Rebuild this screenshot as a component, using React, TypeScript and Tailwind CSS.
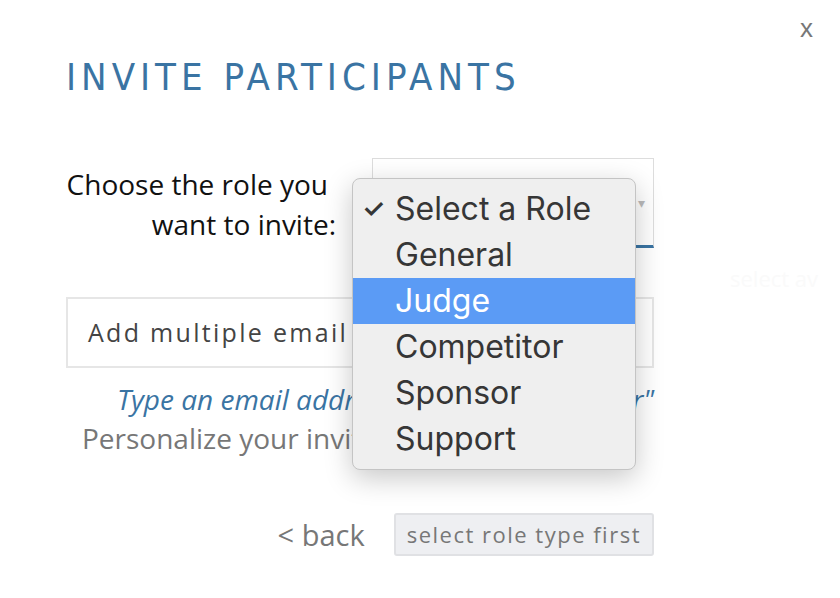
import React from "react";

const roles = ["Select a Role", "General", "Judge", "Competitor", "Sponsor", "Support"];

// native select popup as it is drawn open over the form
const RoleMenu = () => (
  <div className="absolute left-[352px] top-[178px] w-[284px] rounded-[8px] border border-[#c4c4c4] bg-[#efefef] py-[7px] shadow-[0_8px_28px_rgba(0,0,0,0.22)] font-['Inter',sans-serif] text-[32px] text-[#363636]">
    {roles.map((r, i) => (
      <div
        key={r}
        className={
          i === 2
            ? "flex h-[46px] items-center bg-[#5b9bf5] text-white"
            : "flex h-[46px] items-center"
        }
      >
        <span className="w-[42px] pl-[9px] text-[26px] font-semibold leading-none">{i === 0 ? "✓" : ""}</span>
        <span className="leading-none">{r}</span>
      </div>
    ))}
  </div>
);

export default function App() {
  return (
    <div className="relative h-[598px] w-[840px] overflow-hidden bg-white font-['Open_Sans',sans-serif]">
      <button className="absolute right-[27px] top-[9px] font-['Liberation_Sans',sans-serif] text-[26px] text-[#777]">
        x
      </button>

      <div className="flex w-[654px] flex-col pl-[66px] pt-[55px]">
        <h1 className="font-['DejaVu_Sans',sans-serif] font-stretch-condensed text-[38px] font-normal leading-[44px] tracking-[5px] text-[#3a74a3]">
          INVITE PARTICIPANTS
        </h1>

        <div className="mt-[59px] flex items-start">
          <div className="w-[270px] pt-[6px] text-right text-[28px] leading-[40px] text-[#111]">
            <div className="pr-[8px]">Choose the role you</div>
            <div>want to invite:</div>
          </div>
          <div className="ml-[36px] flex h-[90px] flex-1 items-center justify-end border border-[#ddd] border-b-[3px] border-b-[#3a74a3] pr-[8px] text-[14px] text-[#bbb]">
            ▾
          </div>
        </div>

        <div className="mt-[49px] flex h-[71px] items-center border-2 border-[#e6e6e6] px-[20px] text-[25px] tracking-[2.3px] text-[#444]">
          Add multiple email addresses
        </div>

        <div className="mt-[14px] ml-[51px] flex justify-between whitespace-nowrap text-[28px] italic leading-[34px] text-[#3a74a3]">
          <span>Type an email address</span>
          <span>and hit "enter"</span>
        </div>
        <div className="mt-[4px] whitespace-nowrap pl-[16px] text-[28px] leading-[36px] text-[#777]">
          Personalize your invitation:
        </div>

        <div className="mt-[57px] flex items-center justify-end gap-[29px]">
          <button className="text-[29px] text-[#777]">&lt; back</button>
          <button className="h-[43px] rounded-[3px] border-2 border-[#e0e1e4] bg-[#eeeff2] px-[11px] text-[22px] tracking-[1.5px] text-[#777]">
            select role type first
          </button>
        </div>
      </div>

      <div className="absolute left-[730px] top-[262px] w-[110px] overflow-hidden whitespace-nowrap text-[22px] text-[#fafafa]">
        select av
      </div>

      <RoleMenu />
    </div>
  );
}
